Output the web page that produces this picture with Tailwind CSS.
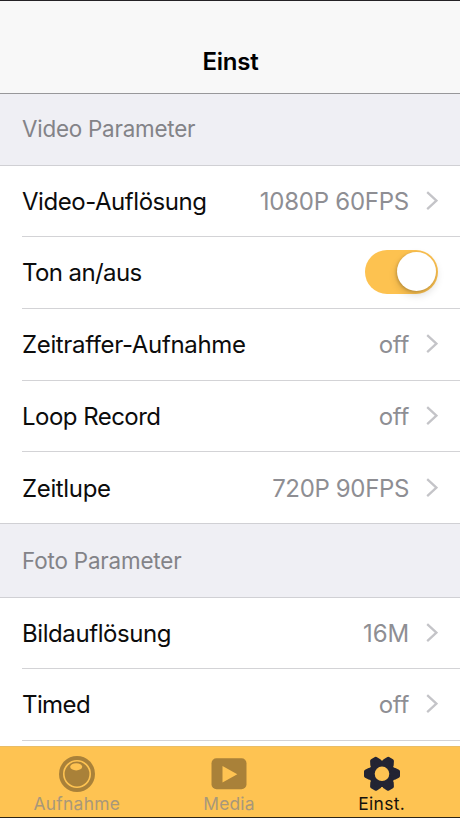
<!DOCTYPE html>
<html lang="de">
<head>
<meta charset="utf-8">
<meta name="viewport" content="width=device-width, initial-scale=1">
<title>Einst</title>
<script src="https://cdn.jsdelivr.net/npm/@tailwindcss/browser@4"></script>
</head>
<body class="bg-white">
<svg class="hidden"><symbol id="chevron" viewBox="0 0 12 20"><path d="M1.2 1.2 10.4 9.7 1.2 18.2" fill="none" stroke="#c4c4c8" stroke-width="2.3"/></symbol></svg>
<div class="flex h-[818px] w-[460px] flex-col overflow-hidden border-t border-b border-t-[#242226] border-b-[#2c2416] bg-white font-['Inter','Liberation_Sans',sans-serif] text-[24px] text-[#0c0c0c]">
  <header class="flex h-[93px] shrink-0 justify-center border-b border-[#98989a] bg-[#f8f8f8] pt-[46px] pl-px">
    <h1 class="text-[24px] leading-[30px] font-semibold tracking-[-0.25px] text-black">Einst</h1>
  </header>
  <main class="min-h-0 flex-1 overflow-hidden">
    <h2 class="flex h-[72px] items-center border-b border-[#d0d0d4] bg-[#efeff4] pb-[2px] pl-[22px] text-[22.4px] tracking-[-0.22px] text-[#838388]"><span>Video Parameter</span></h2>
    <ul class="border-b border-[#d0d0d4]">
      <li class="ml-[22px] flex h-[71px] items-center border-b border-[#d3d3d6] pt-px pr-[22px]"><span class="tracking-[-0.45px]">Video-Auflösung</span><span class="ml-auto tracking-[-0.25px] text-[#8e8e93]">1080P 60FPS</span><svg class="mb-px ml-[17px] h-5 w-3"><use href="#chevron"/></svg></li>
      <li class="ml-[22px] flex h-[72px] items-center border-b border-[#d3d3d6] pr-[22px]"><span class="tracking-[-0.6px]">Ton an/aus</span><span class="mb-[2px] ml-auto flex h-[44px] w-[73px] items-center justify-end rounded-full bg-[#fdc250] pr-[2px]"><span class="size-[39px] rounded-full bg-white shadow-[0_4px_8px_rgba(0,0,0,0.15),-1px_1px_3px_rgba(0,0,0,0.18)]"></span></span></li>
      <li class="ml-[22px] flex h-[72px] items-center border-b border-[#d3d3d6] pr-[22px]"><span class="tracking-[-0.35px]">Zeitraffer-Aufnahme</span><span class="ml-auto tracking-[-0.3px] text-[#8e8e93]">off</span><svg class="mb-px ml-[17px] h-5 w-3"><use href="#chevron"/></svg></li>
      <li class="ml-[22px] flex h-[71px] items-center border-b border-[#d3d3d6] pt-px pr-[22px]"><span class="tracking-[-0.53px]">Loop Record</span><span class="ml-auto tracking-[-0.3px] text-[#8e8e93]">off</span><svg class="mb-[2px] ml-[17px] h-5 w-3"><use href="#chevron"/></svg></li>
      <li class="ml-[22px] flex h-[71px] items-center pt-[2px] pr-[22px]"><span class="tracking-[-0.35px]">Zeitlupe</span><span class="ml-auto tracking-[-0.35px] text-[#8e8e93]">720P 90FPS</span><svg class="mb-px ml-[17px] h-5 w-3"><use href="#chevron"/></svg></li>
    </ul>
    <h2 class="flex h-[74px] items-center border-b border-[#d0d0d4] bg-[#efeff4] pt-px pl-[22px] text-[22.4px] tracking-[-0.16px] text-[#838388]"><span>Foto Parameter</span></h2>
    <ul>
      <li class="ml-[22px] flex h-[71px] items-center border-b border-[#d3d3d6] pt-px pr-[22px]"><span class="tracking-[-0.42px]">Bildauflösung</span><span class="ml-auto tracking-[-0.1px] text-[#8e8e93]">16M</span><svg class="mb-[2px] ml-[17px] h-5 w-3"><use href="#chevron"/></svg></li>
      <li class="ml-[22px] flex h-[72px] items-center border-b border-[#d3d3d6] pr-[22px]"><span class="tracking-[-0.6px]">Timed</span><span class="ml-auto tracking-[-0.3px] text-[#8e8e93]">off</span><svg class="mb-px ml-[17px] h-5 w-3"><use href="#chevron"/></svg></li>
    </ul>
  </main>
  <nav class="grid h-[71px] shrink-0 grid-cols-3 border-t border-[#e9bd66] bg-[#fec352] pr-[2px] text-[17.4px] leading-[20px]">
    <a class="flex flex-col items-center pt-[9px] pl-px text-[#a8987a]">
      <svg class="h-9 w-9" viewBox="0 0 36 36"><circle cx="18" cy="18" r="18" fill="#a98139"/><circle cx="18" cy="18" r="13.2" fill="none" stroke="#fec352" stroke-width="1.6"/><ellipse cx="17.2" cy="10.8" rx="6" ry="3.6" fill="#fec352"/></svg>
      <span class="mt-[2px] tracking-[0.3px]">Aufnahme</span>
    </a>
    <a class="flex flex-col items-center pt-[9px] text-[#a8987a]">
      <svg class="h-9 w-9" viewBox="0 0 36 36"><rect x="0.5" y="2.3" width="35" height="31" rx="5" fill="#a98139"/><path d="M11.5 10v16.4L26.3 18.2Z" fill="#fec352"/></svg>
      <span class="mt-[2px] tracking-[0.2px]">Media</span>
    </a>
    <a class="flex flex-col items-center pt-[9px] text-[#14110c]">
      <svg class="h-9 w-9" viewBox="0 0 36 36"><g fill="#232433" stroke="#232433" stroke-width="4" stroke-linejoin="round"><circle cx="18" cy="17.800" r="11.300"/><path id="tooth" d="M2 15.600 5.500 13.800h25L34 15.600v4.400L30.500 21.800h-25L2 20Z"/><use href="#tooth" transform="rotate(60 18 17.800)"/><use href="#tooth" transform="rotate(120 18 17.800)"/></g><circle cx="18" cy="17.800" r="7.300" fill="#fec352"/></svg>
      <span class="mt-[2px] tracking-[0.3px]">Einst.</span>
    </a>
  </nav>
</div>
</body>
</html>
